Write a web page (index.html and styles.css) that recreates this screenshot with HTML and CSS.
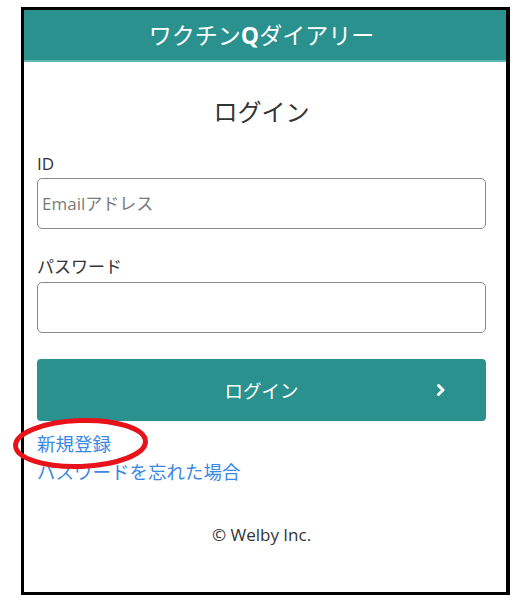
FILE: index.html
```html
<!DOCTYPE html>
<html lang="ja">
<head>
<meta charset="utf-8">
<title>ログイン</title>
<link rel="stylesheet" href="styles.css">
</head>
<body>
<div class="frame">
  <header class="header"><span>ワクチン<b class="q">Q</b>ダイアリー</span></header>
  <main class="main">
    <h1 class="title">ログイン</h1>
    <label class="label" for="id">ID</label>
    <input class="field" id="id" type="text" placeholder="Emailアドレス">
    <label class="label label-pw" for="pw">パスワード</label>
    <input class="field" id="pw" type="password">
    <button class="btn" type="button">
      <span class="btn-text">ログイン</span>
      <svg class="chev" width="10" height="12" viewBox="0 0 10 12"><polyline points="2.5,1.5 7,6 2.5,10.5" fill="none" stroke="#fff" stroke-width="3" stroke-linecap="round" stroke-linejoin="round"/></svg>
    </button>
    <div class="links">
      <a class="link" href="#">新規登録</a>
      <a class="link" href="#">パスワードを忘れた場合</a>
    </div>
    <footer class="footer">© Welby Inc.</footer>
  </main>
</div>
<svg class="mark" width="170" height="90" viewBox="0 0 170 90"><ellipse cx="80.5" cy="43.5" rx="65" ry="23" transform="rotate(-2 80.5 43.5)" fill="none" stroke="#e8121b" stroke-width="5"/></svg>
</body>
</html>
```
FILE: styles.css
```css
* { box-sizing: border-box; }
body {
  margin: 0;
  background: #fff;
  font-family: "Open Sans", "Noto Sans CJK JP", sans-serif;
  color: #333;
  position: relative;
}
.frame {
  margin: 7px 0 0 21px;
  width: 489px;
  height: 588px;
  border: 3px solid #000;
  border-right-width: 4px;
}
.header {
  height: 52px;
  background: #2a918f;
  border-bottom: 2px solid #5cb9b4;
  color: #fff;
  font-size: 23px;
  display: flex;
  align-items: center;
  justify-content: center;
  padding: 0 20px 2px 13px;
  font-family: "Noto Sans CJK JP", sans-serif;
}
.q { font-family: "Open Sans", sans-serif; font-weight: 700; }
.main {
  padding: 0 20px 0 13px;
  display: flex;
  flex-direction: column;
}
.title {
  margin: 32px 0 0;
  font-size: 24px;
  font-weight: 400;
  line-height: 36px;
  text-align: center;
  color: #333;
}
.label {
  display: block;
  margin: 22px 0 2px;
  font-size: 17px;
  line-height: 24px;
  color: #333;
}
.label-pw { margin-top: 26px; margin-bottom: 3px; }
.field {
  display: block;
  width: 100%;
  height: 51px;
  border: 1px solid #8a8a8a;
  border-radius: 5px;
  padding: 0 4px;
  font-family: inherit;
  font-size: 17px;
  color: #333;
  background: #fff;
}
.field::placeholder { color: #7a7a7a; }
.btn {
  margin-top: 26px;
  height: 62px;
  width: 100%;
  border: 0;
  border-radius: 4px;
  background: #2a918f;
  color: #fff;
  display: grid;
  grid-template-columns: 1fr auto 1fr;
  align-items: center;
  padding: 0 40px 0 0;
  font-family: inherit;
  font-size: 18.5px;
}
.btn-text { grid-column: 2; padding-left: 40px; }
.chev { grid-column: 3; justify-self: end; }
.links {
  margin-top: 9px;
  display: flex;
  flex-direction: column;
  align-items: flex-start;
}
.link {
  font-size: 18.5px;
  line-height: 28px;
  color: #3a88e4;
  text-decoration: none;
}
.footer {
  margin-top: 37px;
  text-align: center;
  font-size: 17px;
  line-height: 24px;
  color: #333;
}
.mark {
  position: absolute;
  left: 0;
  top: 400px;
}
```
